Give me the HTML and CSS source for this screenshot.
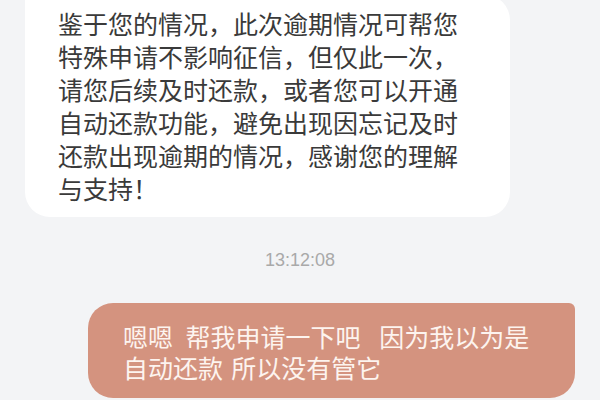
FILE: index.html
```html
<!DOCTYPE html>
<html lang="zh-CN">
<head>
<meta charset="utf-8">
<link rel="stylesheet" href="styles.css">
</head>
<body>
<div class="chat">
  <div class="bubble bubble-in">鉴于您的情况，此次逾期情况可帮您特殊申请不影响征信，但仅此一次，请您后续及时还款，或者您可以开通自动还款功能，避免出现因忘记及时还款出现逾期的情况，感谢您的理解与支持！</div>
  <div class="time">13:12:08</div>
  <div class="bubble bubble-out">嗯嗯&ensp;帮我申请一下吧&ensp;&#8197;因为我以为是自动还款&#8196;所以没有管它</div>
</div>
</body>
</html>
```
FILE: styles.css
```css
html, body {
  margin: 0;
  padding: 0;
  background: #f3f4f6;
  height: 100%;
  overflow: hidden;
}
.chat {
  display: flex;
  flex-direction: column;
  font-family: "Noto Sans CJK SC", "Noto Sans", sans-serif;
}
.bubble {
  box-sizing: border-box;
  font-size: 25px;
}
.bubble-in {
  margin: -5px 0 0 25px;
  width: 485px;
  padding: 12px 42px 12px 33px;
  line-height: 33px;
  background: #ffffff;
  color: #3a3a3a;
  border-radius: 6px 25px 25px 25px;
}
.time {
  margin-top: 33px;
  text-align: center;
  font-family: "Liberation Sans", Arial, sans-serif;
  font-size: 18px;
  line-height: 20px;
  color: #a9a9a9;
}
.bubble-out {
  align-self: flex-end;
  margin: 33px 25px 0 0;
  width: 487px;
  padding: 18px 30px 15px 35px;
  line-height: 31px;
  background: #d4937f;
  color: #fdf4ef;
  border-radius: 25px 6px 25px 25px;
}
```
